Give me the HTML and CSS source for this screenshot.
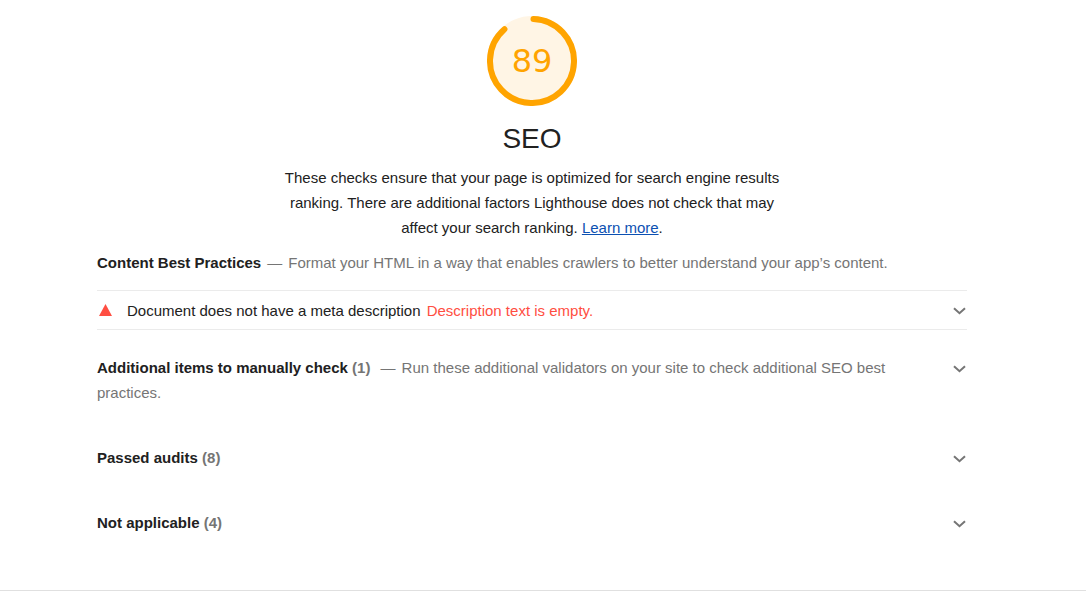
FILE: index.html
```html
<!DOCTYPE html>
<html lang="en">
<head>
<meta charset="utf-8">
<title>SEO report</title>
<link rel="stylesheet" href="styles.css">
</head>
<body>
<main class="report">
  <div class="category">
    <header class="category-header">
      <div class="gauge">
        <svg class="gauge-svg" viewBox="0 0 90 90" aria-hidden="true">
          <circle class="gauge-base" cx="45" cy="45" r="45"/>
          <circle class="gauge-arc" cx="45" cy="45" r="42" pathLength="360" stroke-dasharray="317 360" transform="rotate(-88 45 45)"/>
        </svg>
        <span class="gauge-score">89</span>
      </div>
      <h1 class="category-title">SEO</h1>
      <p class="category-description">These checks ensure that your page is optimized for search engine results ranking. There are additional factors Lighthouse does not check that may affect your search ranking. <a class="link" href="#">Learn more</a>.</p>
    </header>

    <section class="group">
      <p class="group-text"><strong class="group-title">Content Best Practices</strong><span class="group-note">Format your HTML in a way that enables crawlers to better understand your app’s content.</span></p>
      <button class="audit" type="button">
        <svg class="fail-icon" viewBox="0 0 13 12" aria-hidden="true"><path d="M6.500 0L13 12H0z"/></svg>
        <span class="audit-title">Document does not have a meta description <span class="audit-error">Description text is empty.</span></span>
        <svg class="chevron" viewBox="0 0 14 8" aria-hidden="true"><path d="M2 1.200L7.500 6.200L13 1.200"/></svg>
      </button>
    </section>

    <div class="clumps">
      <button class="clump" type="button">
        <span class="clump-text"><strong class="group-title">Additional items to manually check</strong> <strong class="count">(1)</strong> <span class="group-note">Run these additional validators on your site to check additional SEO best practices.</span></span>
        <svg class="chevron" viewBox="0 0 14 8" aria-hidden="true"><path d="M2 1.200L7.500 6.200L13 1.200"/></svg>
      </button>
      <button class="clump" type="button">
        <span class="clump-text"><strong class="group-title">Passed audits</strong> <strong class="count">(8)</strong></span>
        <svg class="chevron" viewBox="0 0 14 8" aria-hidden="true"><path d="M2 1.200L7.500 6.200L13 1.200"/></svg>
      </button>
      <button class="clump" type="button">
        <span class="clump-text"><strong class="group-title">Not applicable</strong> <strong class="count">(4)</strong></span>
        <svg class="chevron" viewBox="0 0 14 8" aria-hidden="true"><path d="M2 1.200L7.500 6.200L13 1.200"/></svg>
      </button>
    </div>
  </div>
</main>
</body>
</html>
```
FILE: styles.css
```css
* {
  box-sizing: border-box;
}

body {
  margin: 0;
  background: #fff;
  color: #212121;
  font-family: "Liberation Sans", Arial, sans-serif;
  font-size: 15px;
  line-height: 25px;
}

button {
  width: 100%;
  margin: 0;
  padding: 0;
  border: 0;
  background: none;
  color: inherit;
  font: inherit;
  text-align: left;
  cursor: pointer;
}

.report {
  padding: 16px 22px 55px 0;
  border-bottom: 1px solid #e0e0e0;
}

.category {
  max-width: 870px;
  margin: 0 auto;
}

.category-header {
  display: flex;
  flex-direction: column;
  align-items: center;
  text-align: center;
}

.gauge {
  display: grid;
  place-items: center;
  width: 90px;
  height: 90px;
}

.gauge-svg,
.gauge-score {
  grid-area: 1 / 1;
}

.gauge-svg {
  width: 90px;
  height: 90px;
}

.gauge-base {
  fill: #fff5e5;
}

.gauge-arc {
  fill: none;
  stroke: #ffa400;
  stroke-width: 6;
  stroke-linecap: round;
}

.gauge-score {
  color: #ffa400;
  font-family: "DejaVu Sans", sans-serif;
  font-size: 32px;
  line-height: 40px;
}

.category-title {
  margin: 13px 0 6px;
  font-size: 28px;
  font-weight: 400;
  line-height: 40px;
}

.category-description {
  max-width: 500px;
  margin: 0;
}

.link {
  color: #0c50b2;
}

.group {
  padding-top: 10px;
}

.group-text {
  margin: 0 0 15px;
}

.group-title,
.count {
  font-weight: 700;
}

.group-note,
.count {
  color: #757575;
}

.group-note::before {
  content: "—";
  margin: 0 6px;
}

.audit {
  display: flex;
  align-items: center;
  padding: 7px 0 6px;
  border-top: 1px solid #ebebeb;
  border-bottom: 1px solid #ebebeb;
}

.fail-icon {
  flex: none;
  width: 13px;
  height: 12px;
  margin: 0 15px 2px 2px;
  fill: #ff4e42;
}

.audit-title {
  flex: 1;
}

.audit-error {
  margin-left: 2px;
  color: #ff4e42;
}

.chevron {
  flex: none;
  width: 14px;
  height: 8px;
  margin-right: 1px;
  fill: none;
  stroke: #757575;
  stroke-width: 2;
}

.clumps {
  display: flex;
  flex-direction: column;
  gap: 40px;
  padding-top: 25px;
}

.clump {
  display: flex;
  justify-content: space-between;
  gap: 40px;
}

.clump .chevron {
  margin-top: 10px;
}
```
